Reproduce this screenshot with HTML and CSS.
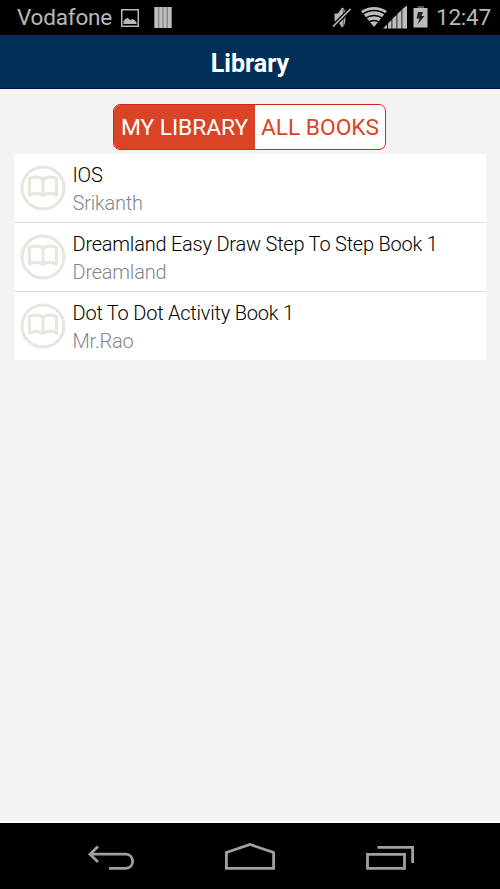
FILE: index.html
```html
<!DOCTYPE html>
<html lang="en">
<head>
<meta charset="utf-8">
<title>Library</title>
<link rel="stylesheet" href="styles.css">
</head>
<body>
<svg class="defs" width="0" height="0" aria-hidden="true">
  <symbol id="book" viewBox="0 0 46 46">
    <circle cx="23" cy="23" r="21" fill="none" stroke="#e9e5df" stroke-width="3"/>
    <path d="M23 14.500C20 11.500 13 11.500 9.500 13.500V30C14 28 19 28 23 30.300C27 28 32 28 36.500 30V13.500C33 11.500 26 11.500 23 14.500V30" fill="none" stroke="#e9e5df" stroke-width="3.200" stroke-linejoin="round"/>
  </symbol>
</svg>
<div class="status">
  <span class="carrier">Vodafone</span>
  <svg class="pic" width="18" height="18" viewBox="0 0 18 18"><rect x=".75" y=".75" width="16.500" height="16.500" fill="none" stroke="#b8b8b8" stroke-width="1.500"/><path d="M2.500 15V12L5 9.500L7 9L9 11L12 10L15.500 13V15Z" fill="#b8b8b8"/></svg>
  <svg class="bars" width="18" height="21" viewBox="0 0 18 21"><rect width="18" height="21" fill="#858585"/><path d="M1 0H4V21H1ZM5.300 0H8.300V21H5.300ZM9.600 0H12.600V21H9.600ZM14 0H17V21H14Z" fill="#c0c0c0"/></svg>
  <svg class="tray" width="100" height="35" viewBox="330 0 100 35">
    <path d="M334.500 13.500H338L342 7.500Q345.500 8 345.500 17T342 27.500L338 21.500H334.500Z" fill="#b8b8b8"/>
    <path d="M343 9Q345 17 343 26" fill="none" stroke="#555" stroke-width="1"/>
    <path d="M333 26.500L350.500 9" stroke="#000" stroke-width="4.200"/>
    <path d="M333 26.500L350.500 9" stroke="#b8b8b8" stroke-width="1.700"/>
    <path d="M374 27L361 11Q374 3 387 11Z" fill="#bcbcbc"/>
    <path d="M362 14.500Q374 6.500 386 14.500M365 18.500Q374 12.500 383 18.500M368 22.500Q374 18.500 380 22.500" fill="none" stroke="#000" stroke-width="1.300"/>
    <path d="M383 28.500L387 24.500V28.500ZM388 23.500L391.500 20V28.500H388ZM392.300 19L396.500 15V28.500H392.300ZM397.300 14L401.500 10V28.500H397.300ZM402.300 9L407 5.500V28.500H402.300Z" fill="#bcbcbc"/>
    <path d="M417.500 6H424V8H417.500Z" fill="#555"/><path d="M413.500 8H427.500V27.500H413.500Z" fill="#bcbcbc"/>
    <path d="M418 12H423L421.500 16H424.500L417.500 24.500L419.500 18.500H416.500Z" fill="#222"/>
  </svg>
  <span class="clock">12:47</span>
</div>
<header class="title"><span>Library</span></header>
<main>
  <div class="tabs"><div class="tab on"><span>MY LIBRARY</span></div><div class="tab"><span>ALL BOOKS</span></div></div>
  <div class="list">
    <div class="row"><svg class="book"><use href="#book"/></svg><div><div class="name">IOS</div><div class="author">Srikanth</div></div></div>
    <div class="row"><svg class="book"><use href="#book"/></svg><div><div class="name">Dreamland Easy Draw Step To Step Book 1</div><div class="author">Dreamland</div></div></div>
    <div class="row"><svg class="book"><use href="#book"/></svg><div><div class="name">Dot To Dot Activity Book 1</div><div class="author">Mr.Rao</div></div></div>
  </div>
</main>
<nav class="nav">
  <svg width="500" height="66" viewBox="0 823 500 66" fill="none" stroke="#a0a0a0" stroke-width="2.800">
    <path d="M98 846.500L90 854.200L98 862M90 854.200H125.500C135 854.200 135 868.300 125.500 868.300H109"/>
    <path d="M226.400 868.400V852.500L250 844.500L273.600 852.500V868.400Z"/>
    <path d="M367.500 854.300H404.500V868.300H367.500ZM377.500 847.400H412.600V863"/>
  </svg>
</nav>
</body>
</html>
```

FILE: styles.css
```css
* { box-sizing: border-box; }
body { margin: 0; width: 500px; height: 889px; display: flex; flex-direction: column; background: #f3f3f3; font-family: Roboto, sans-serif; overflow: hidden; }
.defs { position: absolute; }
.status { height: 35px; flex: none; background: #000; color: #b8b8b8; display: flex; align-items: center; padding: 0 9px 0 17px; font-size: 22.500px; line-height: 37px; white-space: nowrap; }
.carrier { width: 104px; letter-spacing: -0.2px; }
.pic, .bars { flex: none; }
.bars { margin-left: 15px; }
.tray { margin-left: auto; margin-right: 1px; }
.clock { width: 60px; text-align: right; letter-spacing: -0.2px; }
.title { height: 54px; flex: none; background: #003057; border-bottom: 1px solid #00104a; color: #fff; display: flex; align-items: center; justify-content: center; font-size: 25px; font-weight: 700; padding-top: 3px; }
main { flex: 1; border-bottom: 2px solid #fff; }
.tabs { width: 273px; height: 46px; margin: 14.500px 0 4.500px 113px; border: 1px solid #d5261a; border-radius: 7px; background: #fff; display: flex; overflow: hidden; font-size: 22.800px; letter-spacing: -0.05px; color: #d94427; line-height: 45px; white-space: nowrap; }
.tab { flex: 1; text-align: center; }
.tab.on { flex: 0 0 141px; background: #d94427; color: #fff; }
.list { width: 472px; margin-left: 14px; background: #fff; }
.row { height: 69px; display: flex; padding: 11px 0 0 6px; border-bottom: 1px solid #dcdcdc; white-space: nowrap; }
.row:last-child { height: 68px; border-bottom: 0; }
.book { width: 46px; height: 46px; margin-right: 6.500px; flex: none; }
.name, .author { font-size: 20px; font-weight: 300; letter-spacing: -0.22px; line-height: 28px; margin-top: -4px; }
.author { margin-top: 0; color: #85868b; }
.name { color: #000; }
.nav { height: 66px; flex: none; background: #000; }
.nav svg { display: block; }
```
